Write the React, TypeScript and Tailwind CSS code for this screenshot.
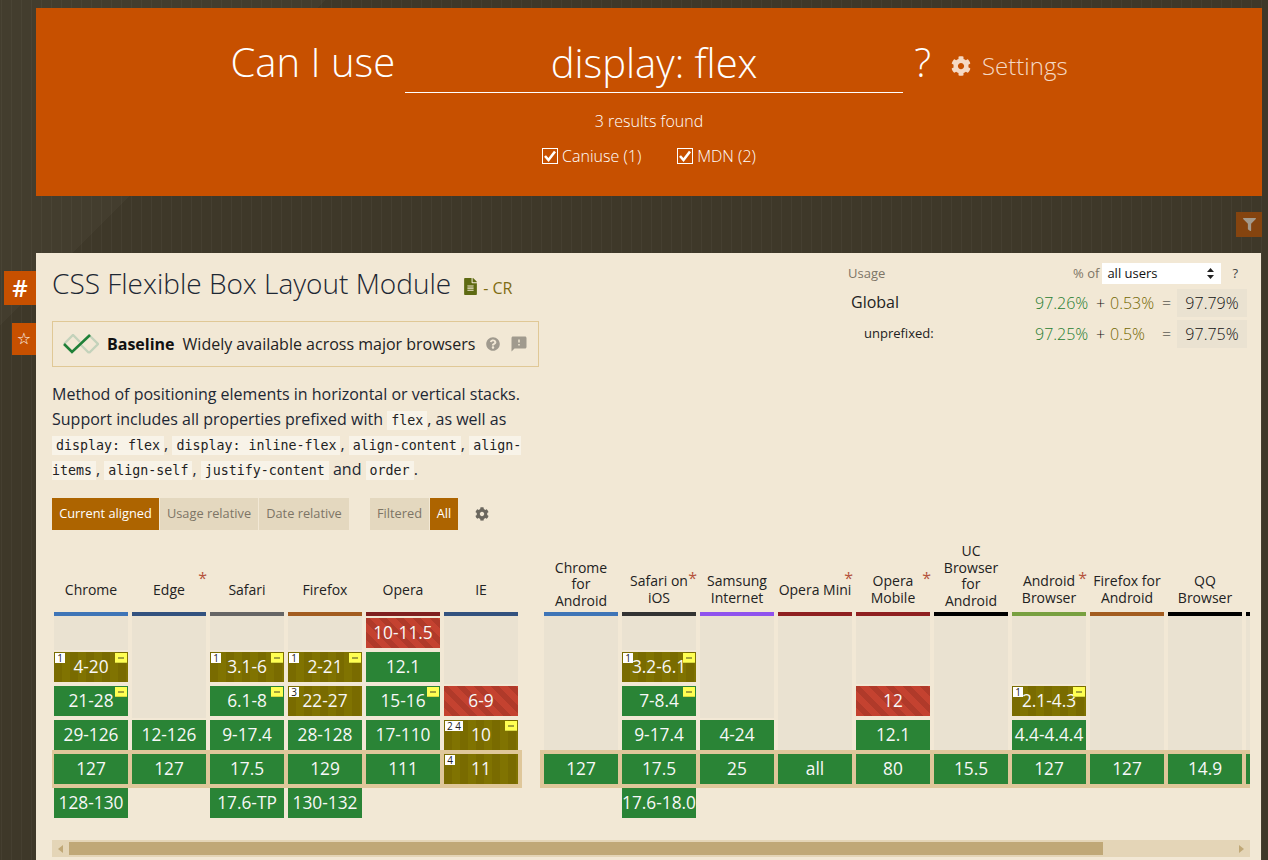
import { FaCog, FaFileAlt, FaFilter, FaQuestionCircle } from "react-icons/fa";
import { MdFeedback } from "react-icons/md";

type Cell = { v: string; s: "y" | "a" | "n"; note?: string; flag?: boolean } | null;
type Browser = { name: string; bar: string; pad: string; star?: boolean; cells: Cell[] };

const y = (v: string, flag?: boolean): Cell => ({ v, s: "y", flag });
const a = (v: string, note?: string, flag?: boolean): Cell => ({ v, s: "a", note, flag });
const n = (v: string): Cell => ({ v, s: "n" });

const desktop: Browser[] = [
  { name: "Chrome", bar: "bg-[#3f75b7]", pad: "pb-[14px]", cells: [null, a("4-20", "1", true), y("21-28", true), y("29-126"), y("127"), y("128-130")] },
  { name: "Edge", bar: "bg-[#33527f]", pad: "pb-[14px]", star: true, cells: [null, null, null, y("12-126"), y("127"), null] },
  { name: "Safari", bar: "bg-[#666666]", pad: "pb-[14px]", cells: [null, a("3.1-6", "1", true), y("6.1-8", true), y("9-17.4"), y("17.5"), y("17.6-TP")] },
  { name: "Firefox", bar: "bg-[#a35c1f]", pad: "pb-[14px]", cells: [null, a("2-21", "1", true), a("22-27", "3"), y("28-128"), y("129"), y("130-132")] },
  { name: "Opera", bar: "bg-[#7f1f1f]", pad: "pb-[14px]", cells: [n("10-11.5"), y("12.1"), y("15-16", true), y("17-110"), y("111"), null] },
  { name: "IE", bar: "bg-[#33527f]", pad: "pb-[14px]", cells: [null, null, n("6-9"), a("10", "2 4", true), a("11", "4"), null] },
];

const mobile: Browser[] = [
  { name: "Chrome for Android", bar: "bg-[#3f75b7]", pad: "pb-[3px]", cells: [null, null, null, null, y("127"), null] },
  { name: "Safari on iOS", bar: "bg-[#333333]", pad: "pb-[6px]", star: true, cells: [null, a("3.2-6.1", "1", true), y("7-8.4", true), y("9-17.4"), y("17.5"), y("17.6-18.0")] },
  { name: "Samsung Internet", bar: "bg-[#8f52ee]", pad: "pb-[6px]", cells: [null, null, null, y("4-24"), y("25"), null] },
  { name: "Opera Mini", bar: "bg-[#8f2020]", pad: "pb-[14px]", star: true, cells: [null, null, null, null, y("all"), null] },
  { name: "Opera Mobile", bar: "bg-[#8f2020]", pad: "pb-[6px]", star: true, cells: [null, null, n("12"), y("12.1"), y("80"), null] },
  { name: "UC Browser for Android", bar: "bg-black", pad: "pb-[3px]", cells: [null, null, null, null, y("15.5"), null] },
  { name: "Android Browser", bar: "bg-[#78a040]", pad: "pb-[6px]", star: true, cells: [null, null, a("2.1-4.3", "1", true), y("4.4-4.4.4"), y("127"), null] },
  { name: "Firefox for Android", bar: "bg-[#a35c1f]", pad: "pb-[6px]", cells: [null, null, null, null, y("127"), null] },
  { name: "QQ Browser", bar: "bg-black", pad: "pb-[6px]", cells: [null, null, null, null, y("14.9"), null] },
  { name: "", bar: "bg-black", pad: "pb-[6px]", cells: [null, null, null, null, y(""), null] },
];

// row height, and the inset of a filled cell inside that row
const rows = [
  { h: "h-[34px]", inset: "py-0.5", band: "" },
  { h: "h-[34px]", inset: "py-0.5", band: "" },
  { h: "h-[34px]", inset: "py-0.5", band: "" },
  { h: "h-8", inset: "pt-0.5", band: "" },
  { h: "h-[38px]", inset: "py-1", band: "bg-[#dfc79a]" },
  { h: "h-8", inset: "pb-0.5", band: "" },
];

const cellStyle = {
  y: "bg-[#2a8436]",
  a: "bg-[repeating-linear-gradient(90deg,#796b00_0,#796b00_8px,#807301_8px,#807301_16px)]",
  n: "bg-[repeating-linear-gradient(45deg,#c44230_0,#c44230_6px,#b03a2a_6px,#b03a2a_12px)]",
};

function VersionCell({ cell, row }: { cell: Cell; row: number }) {
  if (!cell) {
    return <div className={`w-[74px] shrink-0 ${row < 4 ? "bg-[#eae2d1]" : ""}`} />;
  }
  return (
    <div className={`w-[74px] shrink-0 ${rows[row].inset}`}>
      <div className={`relative flex h-[30px] items-center justify-center whitespace-nowrap text-[17.3px] text-[#f8f8f8] ${cellStyle[cell.s]}`}>
        {cell.v}
        {cell.note && (
          <span className="absolute left-px top-px flex h-2.5 min-w-2.5 items-center justify-center gap-1 bg-white px-0.5 text-[10px] leading-none text-[#222]">
            {cell.note}
          </span>
        )}
        {cell.flag && (
          <span className="absolute right-px top-px flex h-2.5 w-3 items-center justify-center border-b border-[#d8d840] bg-[#ffff52]">
            <span className="h-0.5 w-1.5 bg-[#a3a33a]" />
          </span>
        )}
      </div>
    </div>
  );
}

function BrowserGroup({ browsers, className }: { browsers: Browser[]; className: string }) {
  return (
    <div className="flex flex-col">
      <div className={`flex h-[70px] gap-1 ${className}`}>
        {browsers.map((b, i) => (
          <div key={i} className={`relative flex w-[74px] shrink-0 items-end justify-center text-center text-[14px] leading-[16.5px] text-[#222] ${b.pad}`}>
            <span>{b.name}</span>
            {b.star && <span className="absolute right-[-1px] top-[28px] text-[16px] leading-none text-[#b5533c]">*</span>}
          </div>
        ))}
      </div>
      <div className={`flex h-1 gap-1 ${className}`}>
        {browsers.map((b, i) => (
          <div key={i} className={`w-[74px] shrink-0 ${b.bar}`} />
        ))}
      </div>
      {rows.map((r, row) => (
        <div key={row} className={`flex gap-1 ${r.h} ${r.band} ${className}`}>
          {browsers.map((b, i) => (
            <VersionCell key={i} cell={b.cells[row]} row={row} />
          ))}
        </div>
      ))}
    </div>
  );
}

function Checkbox() {
  return (
    <svg width="16" height="16" viewBox="0 0 16 16" className="shrink-0">
      <rect x="0.5" y="0.5" width="15" height="15" fill="none" stroke="#ffffff" />
      <path d="M3 8l3.5 4L13 3.5" fill="none" stroke="#ffffff" strokeWidth="2.6" />
    </svg>
  );
}

function BaselineIcon() {
  return (
    <svg width="36" height="20" viewBox="0 0 36 20" className="shrink-0">
      <path d="M1 10L10 1l7 7M26 19l-8-8" fill="none" stroke="#c3d2bb" strokeWidth="2.4" />
      <path d="M26 1l9 9-9 9" fill="none" stroke="#c3d2bb" strokeWidth="2.4" />
      <path d="M1 10l8 8L27 1" fill="none" stroke="#1f8038" strokeWidth="2.6" />
    </svg>
  );
}

function Code({ children }: { children: string }) {
  return (
    <code className="bg-[#f8f3e8] px-1 py-0.5 font-['DejaVu_Sans_Mono',monospace] text-[13.3px] leading-none text-[#222]">
      {children}
    </code>
  );
}

function UsageRow({ label, labelClass, full, partial, total, last }: { label: string; labelClass: string; full: string; partial: string; total: string; last?: boolean }) {
  return (
    <div className={`flex h-7 items-center ${last ? "" : "mb-[3px]"}`}>
      <div className={`flex-1 ${labelClass}`}>{label}</div>
      <div className="w-[61px] text-[16px] font-light text-[#1f7c30]">{full}</div>
      <div className="w-3.5 text-[16px] font-light text-[#111]">+</div>
      <div className="w-[52px] text-[16px] font-light text-[#736700]">{partial}</div>
      <div className="w-[15px] text-[16px] font-light text-[#111]">=</div>
      <div className="flex h-7 w-[70px] items-center justify-center bg-[#eae2d1] text-[16px] font-light text-[#111]">{total}</div>
    </div>
  );
}

export default function App() {
  return (
    <div className="h-[860px] overflow-hidden bg-[repeating-linear-gradient(90deg,transparent_0,transparent_1px,rgba(255,255,255,0.035)_1px,rgba(255,255,255,0.035)_2px,transparent_2px,transparent_10px),linear-gradient(135deg,#433d2e_230px,#3e3829_230px)] pt-2 font-['Open_Sans',sans-serif] text-[#222]">
      <header className="ml-9 mr-[6px] flex h-[188px] flex-col items-center bg-[#c75000] text-white">
        <div className="mt-[31px] flex h-[54px] items-start font-light">
          <span className="mt-[-2px] text-[40px] leading-[50px]">Can I use</span>
          <div className="ml-[10px] h-[54px] w-[498px] border-b border-white text-center text-[40px] leading-[48px]">display: flex</div>
          <span className="ml-[11px] mt-[-2px] text-[40px] leading-[50px]">?</span>
          <div className="ml-5 mt-[11px] flex items-center gap-[11px] text-[24px] leading-8 text-[#f5d9c4]">
            <FaCog className="h-5 w-5" />
            Settings
          </div>
        </div>
        <div className="mt-4 text-[16px] font-light leading-6">3 results found</div>
        <div className="mt-[11px] flex gap-9 text-[16px] font-light leading-6">
          <label className="flex items-center gap-1"><Checkbox />Caniuse (1)</label>
          <label className="flex items-center gap-1"><Checkbox />MDN (2)</label>
        </div>
      </header>

      <div className="mr-[6px] mt-4 flex justify-end">
        <button className="flex h-[25px] w-[26px] items-center justify-center bg-[#85440f] text-[#a39a8c]">
          <FaFilter className="h-[13px] w-[13px]" />
        </button>
      </div>

      <div className="mt-4 flex">
        <aside className="flex w-9 shrink-0 flex-col items-end pt-[18px]">
          <button className="flex h-[34px] w-8 items-center justify-center bg-[#c75000] text-[24px] font-semibold text-white">#</button>
          <button className="mt-[18px] flex h-8 w-6 items-center justify-center bg-[#c75000] font-['DejaVu_Sans',sans-serif] text-[16px] text-white">☆</button>
        </aside>

        <main className="h-[620px] min-w-0 flex-1 mr-[7px] bg-[#f2e8d5] pl-4 pr-[11px]">
          <div className="flex justify-between">
            <div className="w-[487px] pt-3">
              <div className="flex h-9 items-center whitespace-nowrap">
                <h1 className="text-[28px] font-light leading-9 text-[#1d2733]">CSS Flexible Box Layout Module</h1>
                <FaFileAlt className="ml-[13px] mt-1.5 h-[17px] w-[13px] text-[#5e6a12]" />
                <span className="ml-1.5 mt-[10px] text-[16px] text-[#7f6c12]">- CR</span>
              </div>

              <div className="mt-5 flex h-[46px] items-center border border-[#e0c896] pl-[10px] text-[16px] whitespace-nowrap">
                <BaselineIcon />
                <b className="ml-[8px] font-bold text-[#111]">Baseline</b>
                <span className="ml-2 text-[#222]">Widely available across major browsers</span>
                <FaQuestionCircle className="ml-[11px] h-[14px] w-[14px] text-[#a09a8e]" />
                <MdFeedback className="ml-[10px] h-[18px] w-[18px] text-[#a09a8e]" />
              </div>

              <p className="mt-[15px] text-[16px] leading-[25px] text-[#1d2733]">
                Method of positioning elements in horizontal or vertical stacks. Support includes all properties prefixed with{" "}
                <Code>flex</Code>, as well as <Code>display: flex</Code>, <Code>display: inline-flex</Code>, <Code>align-content</Code>,{" "}
                <Code>align-items</Code>, <Code>align-self</Code>, <Code>justify-content</Code> and <Code>order</Code>.
              </p>

              <div className="mt-4 flex h-8 items-stretch text-[12.8px]">
                <div className="flex w-[107px] items-center justify-center bg-[#ad6400] text-white">Current aligned</div>
                <div className="ml-px flex w-[98px] items-center justify-center bg-[#e4d8bf] text-[#7d7566]">Usage relative</div>
                <div className="ml-px flex w-[90px] items-center justify-center bg-[#e4d8bf] text-[#7d7566]">Date relative</div>
                <div className="ml-[21px] flex w-[59px] items-center justify-center bg-[#e4d8bf] text-[#7d7566]">Filtered</div>
                <div className="ml-px flex w-7 items-center justify-center bg-[#ad6400] text-white">All</div>
                <div className="ml-[17px] flex items-center text-[#6b675e]"><FaCog className="h-[14px] w-[14px]" /></div>
              </div>
            </div>

            <section className="mr-[3px] w-[399px] pt-2.5">
              <div className="flex h-[21px] items-center text-[13px]">
                <span className="flex-1 text-[#7d7566]">Usage</span>
                <span className="mr-[3px] text-[#7d7566]">% of</span>
                <div className="flex h-[21px] w-[119px] items-center justify-between bg-white pl-[5px] pr-[7px] text-[#111]">
                  all users
                  <svg width="7" height="11" viewBox="0 0 7 11"><path d="M3.5 0L7 4H0zM3.5 11L0 7h7z" fill="#222" /></svg>
                </div>
                <span className="ml-[11px] mr-[9px] text-[#444]">?</span>
              </div>
              <div className="mt-[5px]">
                <UsageRow label="Global" labelClass="pb-0.5 pl-[3px] text-[16px] text-[#222]" full="97.26%" partial="0.53%" total="97.79%" />
                <UsageRow label="unprefixed:" labelClass="pl-4 text-[13px] text-[#222]" full="97.25%" partial="0.5%" total="97.75%" last />
              </div>
            </section>
          </div>

          <div className="mt-3 flex gap-[18px]">
            <BrowserGroup browsers={desktop} className="pl-0.5 pr-1" />
            <div className="min-w-0 flex-1 overflow-hidden">
              <BrowserGroup browsers={mobile} className="w-max min-w-full pl-1" />
            </div>
          </div>

          <div className="mt-5 flex h-[17px] items-center bg-[#e4d5b7]">
            <svg width="5" height="8" viewBox="0 0 5 8" className="ml-1.5 shrink-0"><path d="M5 0v8L0 4z" fill="#c0a877" /></svg>
            <div className="ml-1.5 h-[13px] w-[1034px] bg-[#c0a877]" />
            <svg width="5" height="8" viewBox="0 0 5 8" className="ml-auto mr-1.5 shrink-0"><path d="M0 0v8l5-4z" fill="#c0a877" /></svg>
          </div>
        </main>
      </div>
    </div>
  );
}
